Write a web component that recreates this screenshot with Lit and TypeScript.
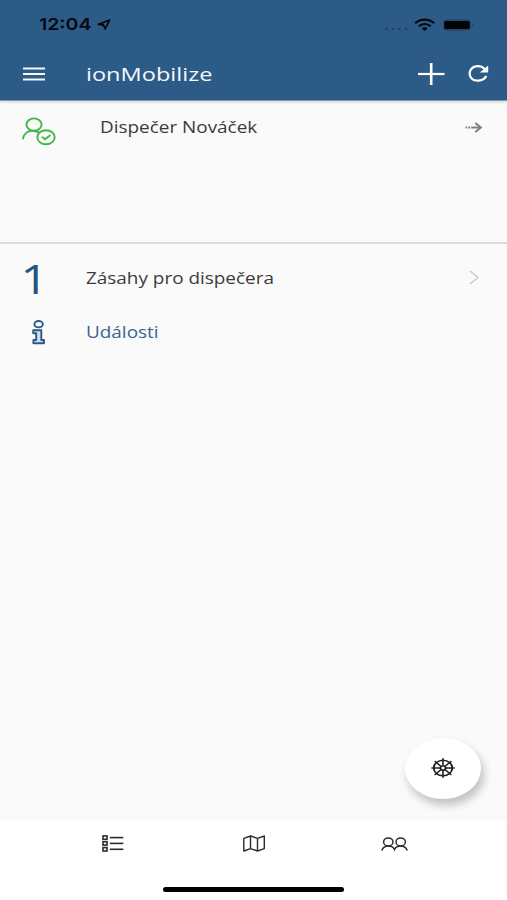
import { LitElement, html, css, svg } from "lit";
import { customElement } from "lit/decorators.js";

const helmSpokes = [0, 45, 90, 135, 180, 225, 270, 315];

@customElement("app-root")
export class AppRoot extends LitElement {
  static styles = css`
    :host {
      display: flex;
      flex-direction: column;
      position: relative;
      height: 900px;
      background: #fafafa;
      color: #3a3a3a;
      font: 16px "Open Sans", "Noto Sans", sans-serif;
      overflow: hidden;
    }
    svg { display: block; flex: none; fill: none; overflow: visible; }
    .wide {
      display: inline-block;
      white-space: nowrap;
      transform-origin: 0 50%;
      transform: scaleX(1.182);
    }
    header {
      flex: none;
      height: 100px;
      background: #2d5b87;
      border-bottom: 1px solid #8798b2;
      box-shadow: 0 1px 3px rgba(50, 40, 60, 0.2);
      color: #f4f8fc;
    }
    .status {
      display: flex;
      align-items: center;
      height: 49px;
      padding: 0 33px 0 39px;
      color: #05080c;
    }
    .clock {
      width: 58px;
      font: 600 16.5px/49px "Inter", sans-serif;
    }
    .clock .wide { transform: scaleX(1.18); }
    .spacer { flex: 1; }
    .toolbar {
      display: flex;
      align-items: center;
      height: 49px;
      padding: 0 18px 0 23px;
    }
    .title { flex: 1; margin-left: 41px; font-size: 19px; line-height: 48px; }
    .title .wide { transform: scaleX(1.24); }
    .add { margin-right: 23px; }
    .person {
      flex: none;
      display: flex;
      height: 141px;
      border-bottom: 2px solid #dbdbdb;
      padding: 0 24px 0 22px;
    }
    .person .badge { margin-top: 16px; }
    .person .name { flex: 1; margin-left: 44px; line-height: 53px; }
    .person .go { margin-top: 21px; }
    .row {
      flex: none;
      display: grid;
      grid-template-columns: 64px 1fr auto;
      align-items: center;
      height: 54px;
      padding: 0 28px 0 22px;
    }
    .row.first { margin-top: 7px; }
    .count { font-size: 40.5px; line-height: 52px; padding-top: 2px; color: #235283; }
    .count .wide { transform: translateX(-1.5px) scaleX(1.2); }
    .info { margin-left: 9px; }
    .link { color: #3a648f; }
    .fab {
      position: absolute;
      left: 405px;
      top: 738px;
      width: 76px;
      height: 61px;
      border-radius: 50%;
      background: #fff;
      box-shadow: 3px 6px 10px rgba(0, 0, 0, 0.24);
      display: flex;
      align-items: center;
      justify-content: center;
    }
    .fab svg { margin-bottom: 2px; }
    footer {
      flex: none;
      margin-top: auto;
      height: 80px;
      background: #fff;
      display: flex;
      flex-direction: column;
      align-items: center;
    }
    .tabs {
      display: grid;
      grid-template-columns: repeat(3, 141px);
      justify-items: center;
      align-items: center;
      height: 47px;
    }
    .home {
      width: 181px;
      height: 5px;
      border-radius: 3px;
      background: #000;
      margin-top: 20px;
    }
  `;

  render() {
    return html`
      <header>
        <div class="status">
          <div class="clock"><span class="wide">12:04</span></div>
          <svg width="14" height="12" viewBox="0 0 14 12">
            <path d="M1.500 5.300 12.600 1 8.200 9.800 6.500 6Z" stroke="#05080c" stroke-width="1.800" stroke-linejoin="round" />
          </svg>
          <div class="spacer"></div>
          <svg width="91" height="14" viewBox="0 0 91 14">
            <g fill="#1f4265">
              <circle cx="3.500" cy="11" r="1.300" /><circle cx="10" cy="11" r="1.300" />
              <circle cx="16.500" cy="11" r="1.300" /><circle cx="23" cy="11" r="1.300" />
            </g>
            <g stroke="#05080c" stroke-width="2.200">
              <path d="M32.200 5.200C37.500.4 45.900.4 51.200 5.200" />
              <path d="M35.700 8.300C39.200 5.200 44.200 5.200 47.700 8.300" />
            </g>
            <path d="M38.700 10.300Q41.700 8 44.700 10.300L41.700 13Z" fill="#05080c" />
            <rect x="60" y="1.500" width="28" height="11" rx="3" stroke="#264d74" stroke-width="1" />
            <rect x="61.200" y="2.700" width="25.600" height="8.600" rx="1.600" fill="#030406" />
            <path d="M89.500 5v4q2-2 0-4Z" fill="#1d3f61" />
          </svg>
        </div>
        <div class="toolbar">
          <svg width="22" height="14" viewBox="0 0 22 14">
            <path d="M0 1.500H22M0 7H22M0 12.500H22" stroke="#f2f7fb" stroke-width="2" />
          </svg>
          <div class="title"><span class="wide">ionMobilize</span></div>
          <svg class="add" width="27" height="22" viewBox="0 0 27 22">
            <path d="M0 11H26.500" stroke="#fff" stroke-width="2.200" />
            <path d="M13.200 0V22" stroke="#fff" stroke-width="2.600" />
          </svg>
          <svg width="21" height="17" viewBox="0 0 21 17">
            <path d="M16.600 3.900C13 .2 6.600.4 3.500 3.700C-.2 8 2 14.300 7.800 15.500C12.500 16.400 17 14.200 18.300 11" stroke="#fff" stroke-width="2.200" />
            <path d="M20.200.5V7.400H11.800Z" fill="#fff" />
          </svg>
        </div>
      </header>

      <section class="person">
        <svg class="badge" width="34" height="29" viewBox="0 0 34 29" stroke="#43b649" stroke-width="1.900" stroke-linecap="round">
          <ellipse cx="12" cy="7.600" rx="7.600" ry="6.200" />
          <path d="M1 21.500C2 16.500 6 13.700 10.500 13.700C13 13.700 15 14.300 16.800 15.500" />
          <ellipse cx="24" cy="20.300" rx="8.700" ry="7" />
          <path d="M20.500 20.300 23 22.300 27.900 18.500" />
        </svg>
        <div class="name"><span class="wide">Dispečer Nováček</span></div>
        <svg class="go" width="18" height="11" viewBox="0 0 18 11" stroke="#808080">
          <path d="M.5 5.500H2M3.200 5.500H5.200M6.200 5.500H15" stroke-width="1.900" />
          <path d="M10.300 1 15.800 5.500 10.300 10" stroke-width="2.100" />
        </svg>
      </section>

      <div class="row first">
        <div class="count"><span class="wide">1</span></div>
        <div><span class="wide">Zásahy pro dispečera</span></div>
        <svg width="10" height="14" viewBox="0 0 10 14">
          <path d="M1 0 9 6.500 1 13" stroke="#c6c6c8" stroke-width="1.300" />
        </svg>
      </div>
      <div class="row">
        <svg class="info" width="14" height="25" viewBox="0 0 14 25" stroke="#2a5988" stroke-width="1.900">
          <ellipse cx="7.600" cy="4.200" rx="4.200" ry="3.200" />
          <path d="M2.200 10.200H10.300V20H13V23.300H2.400V20H5.200V13.300H2.200Z" fill="#d3dde7" stroke-linejoin="round" />
        </svg>
        <div class="link"><span class="wide">Události</span></div>
      </div>

      <div class="fab">
        <svg width="24" height="20" viewBox="-12 -12 24 24" preserveAspectRatio="none" stroke="#222">
          <circle r="9.300" stroke-width="1.900" />
          <circle r="2.600" stroke-width="1.700" />
          ${helmSpokes.map(
            (a) => svg`<path d="M0-2.600V-11.100" stroke-width="1.600" stroke-linecap="round" transform="rotate(${a})" />`
          )}
        </svg>
      </div>

      <footer>
        <div class="tabs">
          <svg width="22" height="17" viewBox="0 0 22 17" stroke="#2b2b2b" stroke-width="1.600">
            ${[0.9, 6.7, 12.6].map(
              (y) => svg`<rect x="1" y=${y} width="4" height="3.400" /><path d="M7.800 ${y + 1.7}H21.300" />`
            )}
          </svg>
          <svg width="22" height="17" viewBox="0 0 22 17" stroke="#2b2b2b" stroke-width="1.400" stroke-linejoin="round">
            <path d="M.8 3.300 7.500 1 14.500 3.300 21.300 1V13.600L14.500 16 7.500 13.600.8 16ZM7.500 1V13.600M14.500 3.300V16" />
          </svg>
          <svg width="27" height="14" viewBox="0 0 27 14" stroke="#2b2b2b" stroke-width="1.500" stroke-linecap="round">
            <ellipse cx="7.300" cy="4.900" rx="4.700" ry="4" />
            <ellipse cx="19.700" cy="4.900" rx="4.700" ry="4" />
            <path d="M1 13C2 10.300 4 8.900 7.300 8.900C10.500 8.900 12.600 10.300 13.500 12.500C14.400 10.300 16.500 8.900 19.700 8.900C23 8.900 25 10.300 26 13" />
          </svg>
        </div>
        <div class="home"></div>
      </footer>
    `;
  }
}
